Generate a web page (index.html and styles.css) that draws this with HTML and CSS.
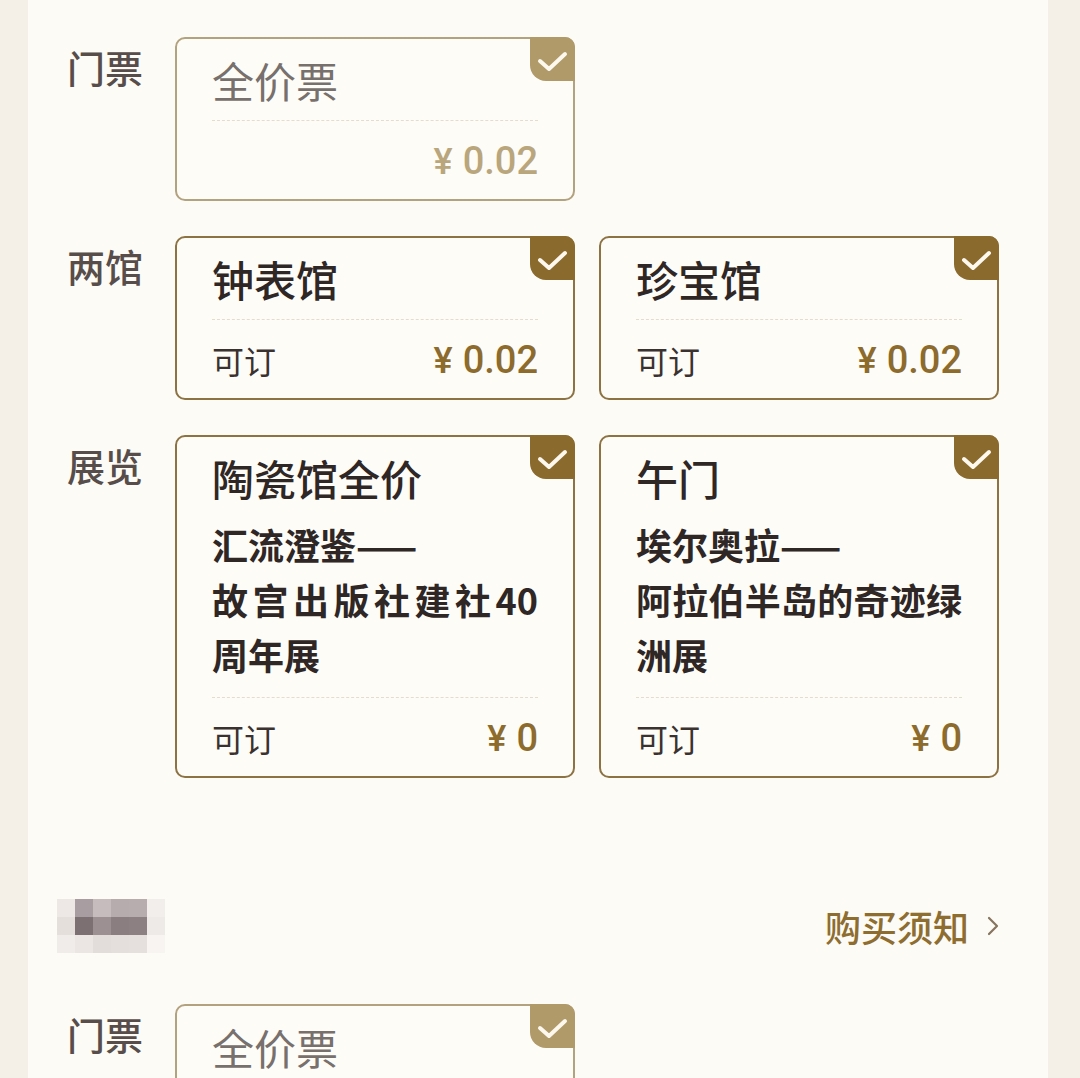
FILE: index.html
```
<!DOCTYPE html>
<html>
	<head>
		<meta charset="utf-8">
		<title>选择票种</title>
		<link rel="stylesheet" href="styles.css">
	</head>
	<body>
		<div class="page">

			<div class="sec">
				<div class="row">
					<div class="label">门票</div>
					<div class="cards">
						<div class="card off">
							<span class="tick"><svg viewBox="0 0 45 44"><polyline points="10,24 19,32 35,17"/></svg></span>
							<div class="title">全价票</div>
							<div class="line"></div>
							<div class="foot end">
								<span class="price"><i>¥</i>0.02</span>
							</div>
						</div>
					</div>
				</div>

				<div class="row">
					<div class="label">两馆</div>
					<div class="cards">
						<div class="card">
							<span class="tick"><svg viewBox="0 0 45 44"><polyline points="10,24 19,32 35,17"/></svg></span>
							<div class="title">钟表馆</div>
							<div class="line"></div>
							<div class="foot">
								<span class="status">可订</span>
								<span class="price"><i>¥</i>0.02</span>
							</div>
						</div>
						<div class="card">
							<span class="tick"><svg viewBox="0 0 45 44"><polyline points="10,24 19,32 35,17"/></svg></span>
							<div class="title">珍宝馆</div>
							<div class="line"></div>
							<div class="foot">
								<span class="status">可订</span>
								<span class="price"><i>¥</i>0.02</span>
							</div>
						</div>
					</div>
				</div>

				<div class="row">
					<div class="label">展览</div>
					<div class="cards">
						<div class="card">
							<span class="tick"><svg viewBox="0 0 45 44"><polyline points="10,24 19,32 35,17"/></svg></span>
							<div class="title">陶瓷馆全价</div>
							<div class="sub">汇流澄鉴——<br>故宫出版社建社40周年展</div>
							<div class="line"></div>
							<div class="foot">
								<span class="status">可订</span>
								<span class="price"><i>¥</i>0</span>
							</div>
						</div>
						<div class="card">
							<span class="tick"><svg viewBox="0 0 45 44"><polyline points="10,24 19,32 35,17"/></svg></span>
							<div class="title">午门</div>
							<div class="sub">埃尔奥拉——<br>阿拉伯半岛的奇迹绿洲展</div>
							<div class="line"></div>
							<div class="foot">
								<span class="status">可订</span>
								<span class="price"><i>¥</i>0</span>
							</div>
						</div>
					</div>
				</div>
			</div>

			<div class="sec">
				<div class="sec-head">
					<div class="mosaic">
						<span class="m1"></span><span class="m2"></span><span class="m3"></span><span class="m4"></span><span class="m5"></span><span class="m6"></span>
						<span class="m7"></span><span class="m8"></span><span class="m9"></span><span class="m10"></span><span class="m11"></span><span class="m12"></span>
						<span class="m13"></span><span class="m14"></span><span class="m15"></span><span class="m16"></span><span class="m17"></span><span class="m18"></span>
					</div>
					<a class="notice" href="#">购买须知<svg viewBox="0 0 12 20"><polyline points="2,2 10,10 2,18"/></svg></a>
				</div>

				<div class="row">
					<div class="label">门票</div>
					<div class="cards">
						<div class="card off">
							<span class="tick"><svg viewBox="0 0 45 44"><polyline points="10,24 19,32 35,17"/></svg></span>
							<div class="title">全价票</div>
						</div>
					</div>
				</div>
			</div>

		</div>
	</body>
</html>
```
FILE: styles.css
```
body {
	margin: 0;
	background: #f4f0e7;
	font-family: "Noto Sans CJK SC", "Noto Sans", sans-serif;
	color: #2f2725;
}

.page {
	margin: 0 32px 0 28px;
	background: #fdfbf5;
	padding: 37px 49px 60px 39px;
	min-height: 1000px;
}

.sec + .sec {
	margin-top: 121px;
}

.row {
	display: grid;
	grid-template-columns: 108px 1fr;
	margin-bottom: 35px;
}

.row:last-child {
	margin-bottom: 0;
}

.label {
	font-size: 38px;
	line-height: 52px;
	margin-top: 4px;
	font-weight: 500;
	color: #574d4a;
}

.cards {
	display: grid;
	grid-template-columns: 400px 400px;
	gap: 24px;
	align-items: start;
}

.card {
	position: relative;
	border: 2px solid #8d7344;
	border-radius: 10px;
	padding: 16px 35px 18px;
	background: #fefcf7;
}

.tick {
	position: absolute;
	top: -2px;
	right: -2px;
	width: 45px;
	height: 44px;
	background: #8b6a2e;
	border-radius: 0 10px 0 16px;
}

.tick svg {
	display: block;
	width: 45px;
	height: 44px;
	fill: none;
	stroke: #fdf8ee;
	stroke-width: 4;
	stroke-linecap: round;
	stroke-linejoin: round;
}

.title {
	font-size: 42px;
	line-height: 50px;
	font-weight: 500;
	color: #2f2725;
}

.sub {
	margin-top: 14px;
	font-size: 36px;
	line-height: 55px;
	font-weight: 700;
	text-align: justify;
	color: #2f2725;
}

.line {
	margin-top: 15px;
	border-top: 1px dashed #e4ddcf;
}

.foot {
	display: flex;
	justify-content: space-between;
	align-items: center;
	height: 40px;
	margin-top: 20px;
}

.foot.end {
	justify-content: flex-end;
}

.status {
	font-size: 32px;
	color: #3a3230;
}

.price {
	font-family: Roboto, "Liberation Sans", sans-serif;
	font-size: 38px;
	font-weight: 500;
	color: #8c6b2d;
}

.price i {
	font-style: normal;
	font-size: 36px;
	margin-right: 10px;
}

/* 未选中的票种颜色淡一些 */
.card.off {
	border-color: #b3a27f;
}

.card.off .tick {
	background: #b09a6a;
}

.card.off .title {
	font-weight: 400;
	color: #77706d;
}

.card.off .price {
	color: #b9a67c;
}

.sec-head {
	display: flex;
	justify-content: space-between;
	align-items: center;
	height: 54px;
	margin: 0 0 51px -10px;
}

.mosaic {
	display: grid;
	grid-template-columns: repeat(6, 18px);
	grid-template-rows: repeat(3, 18px);
}

.m1 { background: #ede8e6; }
.m2 { background: #a89da0; }
.m3 { background: #c6bcbd; }
.m4 { background: #b6abad; }
.m5 { background: #b7acae; }
.m6 { background: #f2eeec; }
.m7 { background: #e5dfdc; }
.m8 { background: #7d7073; }
.m9 { background: #9c9093; }
.m10 { background: #8a7e81; }
.m11 { background: #8c8083; }
.m12 { background: #eeeae7; }
.m13 { background: #f0ece9; }
.m14 { background: #ebe6e3; }
.m15 { background: #e2dcda; }
.m16 { background: #e4dfdc; }
.m17 { background: #e5e0dd; }
.m18 { background: #f7f4f1; }

.notice {
	display: flex;
	align-items: center;
	font-size: 36px;
	font-weight: 500;
	color: #8e6d30;
	text-decoration: none;
}

.notice svg {
	width: 12px;
	height: 20px;
	margin-left: 18px;
	fill: none;
	stroke: #85745f;
	stroke-width: 2.2;
	stroke-linecap: round;
	stroke-linejoin: round;
}
```
